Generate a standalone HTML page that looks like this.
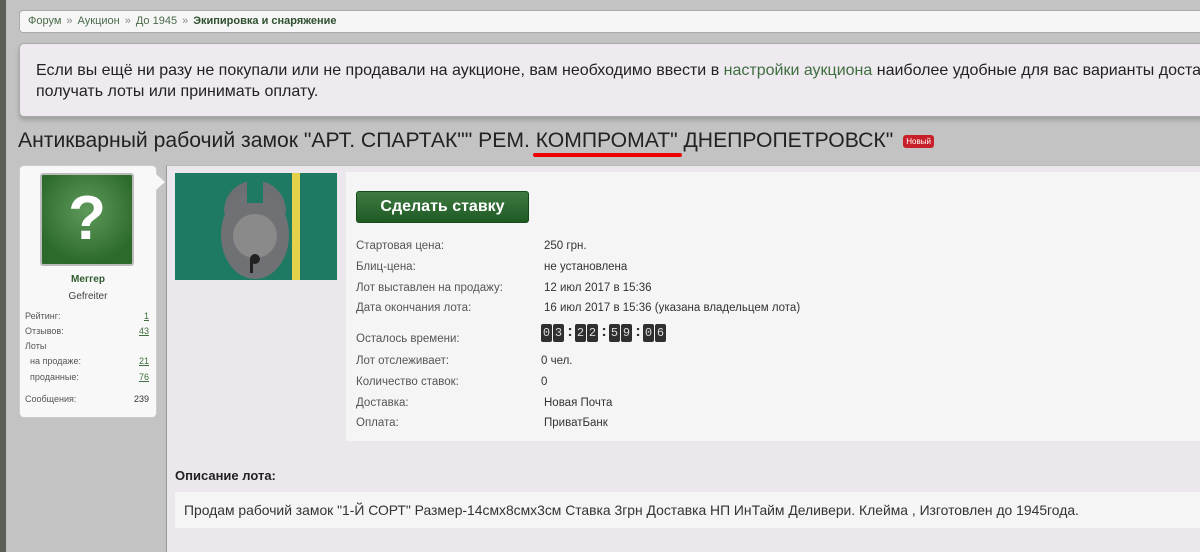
<!DOCTYPE html>
<html><head><meta charset="utf-8"><style>
*{margin:0;padding:0;box-sizing:border-box}
body{width:1200px;height:552px;overflow:hidden;background:#c3c3c3;font-family:"Liberation Sans","DejaVu Sans",sans-serif;position:relative;color:#333}
.abs{position:absolute}
.strip{left:0;top:0;width:6px;height:552px;background:#5a5f58}
.bc{left:19px;top:10px;width:1200px;height:23px;background:#f6f6f6;border:1px solid #aaa;border-radius:4px;font-size:11px;color:#4a6a4a;padding:4px 8px;white-space:nowrap}
.bc b{color:#2f4f2f}
.bc span{color:#888;margin:0 5px}
.note{left:19px;top:43px;width:1200px;height:74px;background:#efeaf0;border:1px solid #aaa;border-radius:5px;box-shadow:0 3px 5px rgba(0,0,0,.2);font-size:16px;line-height:21px;padding:16px 16px;color:#222;white-space:nowrap}
.note a{color:#3f6e3f}
.title{left:18px;top:129px;font-size:21.15px;color:#222;white-space:nowrap}
.title .k{position:relative}
.title .k:after{content:"";position:absolute;left:-3px;right:-4px;bottom:-5px;height:4px;background:#e00;border-radius:2px}
.badge{display:inline-block;background:#c8202a;color:#fff;font-size:8px;padding:2px 3px;border-radius:3px;vertical-align:3px;margin-left:10px}
.main{left:166px;top:165px;width:1034px;height:387px;background:#ece7ed;border-left:1px solid #999;border-top:1px solid #bbb}
.user{left:19px;top:165px;width:138px;height:253px;background:#f8f8f8;border-radius:5px;border:1px solid #ccc}
.arrow{left:156px;top:174px;width:0;height:0;border-top:8px solid transparent;border-bottom:8px solid transparent;border-left:9px solid #f8f8f8}
.ava{left:40px;top:173px;width:94px;height:93px;border:2px solid #bbb;border-radius:3px;background:radial-gradient(circle at 50% 40%,#5f9a5b,#2c6a2c 75%);color:#fff;font-size:62px;font-weight:bold;text-align:center;line-height:88px}
.uname{left:19px;top:274px;width:138px;text-align:center;font-size:10px;font-weight:bold;color:#2e5a2e}
.urank{left:19px;top:291px;width:138px;text-align:center;font-size:10px;color:#444}
.st{font-size:9px;color:#555;left:25px;width:124px}
.st u{position:absolute;right:0;color:#3f6e3f}
.st i{position:absolute;right:0;font-style:normal;color:#333}
.img{left:175px;top:173px;width:162px;height:107px;background:#1d7a62;overflow:hidden}
.info{left:346px;top:172px;width:860px;height:269px;background:#f5f5f5}
.btn{left:356px;top:191px;width:173px;height:32px;background:linear-gradient(#3e7a41,#1f5a25);border:1px solid #174a1b;border-radius:3px;color:#fff;font-weight:bold;font-size:16px;text-align:center;line-height:30px}
.row{left:356px;font-size:11.5px;color:#555;white-space:nowrap}
.val{left:544px;font-size:11.5px;color:#333;white-space:nowrap}
.dg{display:inline-block;width:11px;height:18px;background:#2f2f2f;color:#ddd;font-size:12px;text-align:center;line-height:18px;border-radius:2px;margin-right:1px;font-family:"Liberation Mono",monospace}
.col{display:inline-block;width:10px;text-align:center;font-weight:bold;color:#333}
.dh{left:175px;top:468px;font-size:13px;font-weight:bold;color:#222}
.desc{left:175px;top:492px;width:1030px;height:36px;background:#f5f5f5;font-size:13.9px;color:#333;padding:10px 9px;white-space:nowrap}
</style></head><body>
<div class="abs strip"></div>
<div class="abs bc">Форум<span>»</span>Аукцион<span>»</span>До 1945<span>»</span><b>Экипировка и снаряжение</b></div>
<div class="abs note">Если вы ещё ни разу не покупали или не продавали на аукционе, вам необходимо ввести в <a>настройки аукциона</a> наиболее удобные для вас варианты доставки,<br>получать лоты или принимать оплату.</div>
<div class="abs title">Антикварный рабочий замок "АРТ. СПАРТАК"" РЕМ. <span class="k">КОМПРОМАТ"</span> ДНЕПРОПЕТРОВСК"<span class="badge">Новый</span></div>
<div class="abs main"></div>
<div class="abs user"></div>
<div class="abs arrow"></div>
<div class="abs ava">?</div>
<div class="abs uname">Меггер</div>
<div class="abs urank">Gefreiter</div>
<div class="abs st" style="top:311px">Рейтинг:<u>1</u></div>
<div class="abs st" style="top:326px">Отзывов:<u>43</u></div>
<div class="abs st" style="top:341px">Лоты</div>
<div class="abs st" style="top:356px">&nbsp;&nbsp;на продаже:<u>21</u></div>
<div class="abs st" style="top:372px">&nbsp;&nbsp;проданные:<u>76</u></div>
<div class="abs st" style="top:394px">Сообщения:<i>239</i></div>
<div class="abs img"><svg width="162" height="107"><rect width="162" height="107" fill="#1f7a63"/><rect x="117" y="0" width="8" height="107" fill="#e6d24a"/><path d="M55 40 C55 5 105 5 105 40" fill="none" stroke="#6e6f72" stroke-width="12"/><ellipse cx="80" cy="62" rx="34" ry="44" fill="#707175"/><rect x="72" y="8" width="16" height="22" fill="#1f7a63"/><ellipse cx="80" cy="63" rx="22" ry="22" fill="#8a8a8a"/><circle cx="80" cy="86" r="5" fill="#222"/><rect x="75" y="86" width="3" height="14" fill="#222"/></svg></div>
<div class="abs info"></div>
<div class="abs btn">Сделать ставку</div>
<div class="abs row" style="top:240px">Стартовая цена:</div><div class="abs val" style="top:240px">250 грн.</div>
<div class="abs row" style="top:261px">Блиц-цена:</div><div class="abs val" style="top:261px">не установлена</div>
<div class="abs row" style="top:282px">Лот выставлен на продажу:</div><div class="abs val" style="top:282px">12 июл 2017 в 15:36</div>
<div class="abs row" style="top:302px">Дата окончания лота:</div><div class="abs val" style="top:302px">16 июл 2017 в 15:36 (указана владельцем лота)</div>
<div class="abs row" style="top:333px">Осталось времени:</div>
<div class="abs" style="left:541px;top:323px;white-space:nowrap"><span class="dg">0</span><span class="dg">3</span><span class="col">:</span><span class="dg">2</span><span class="dg">2</span><span class="col">:</span><span class="dg">5</span><span class="dg">9</span><span class="col">:</span><span class="dg">0</span><span class="dg">6</span></div>
<div class="abs row" style="top:355px">Лот отслеживает:</div><div class="abs val" style="top:355px;left:541px">0 чел.</div>
<div class="abs row" style="top:376px">Количество ставок:</div><div class="abs val" style="top:376px;left:541px">0</div>
<div class="abs row" style="top:397px">Доставка:</div><div class="abs val" style="top:397px">Новая Почта</div>
<div class="abs row" style="top:417px">Оплата:</div><div class="abs val" style="top:417px">ПриватБанк</div>
<div class="abs dh">Описание лота:</div>
<div class="abs desc">Продам рабочий замок "1-Й СОРТ" Размер-14смх8смх3см Ставка 3грн Доставка НП ИнТайм Деливери. Клейма , Изготовлен до 1945года.</div>
</body></html>
